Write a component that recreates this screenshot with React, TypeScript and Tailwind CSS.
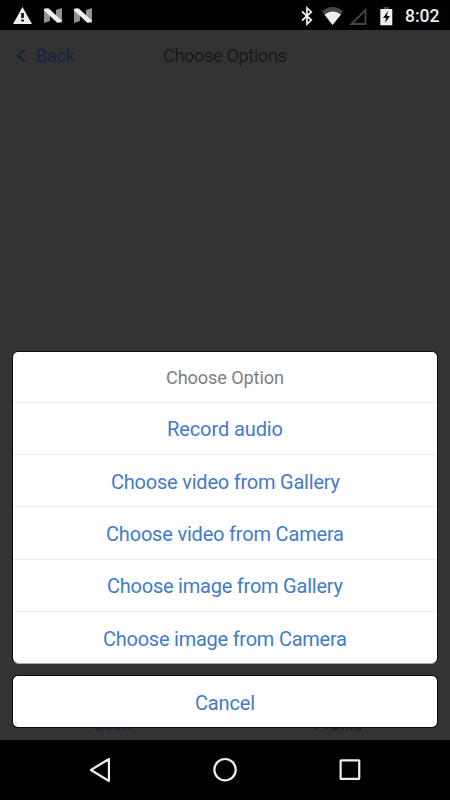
const options = [
  { label: "Record audio", width: 116 },
  { label: "Choose video from Gallery", width: 229 },
  { label: "Choose video from Camera", width: 238 },
  { label: "Choose image from Gallery", width: 236 },
  { label: "Choose image from Camera", width: 244 },
];

function Label({ text, width, size, baseline = 20, className = "" }: { text: string; width: number; size: number; baseline?: number; className?: string }) {
  return (
    <svg width={width} height="28" className={`overflow-visible ${className}`}>
      <text x="0" y={baseline} fontSize={size} textLength={width} fill="currentColor">{text}</text>
    </svg>
  );
}

function NougatIcon() {
  return (
    <svg width="18" height="16" viewBox="0 0 18 16">
      <path d="M0 1 6 3V13L0 15ZM18 0V15L12 13V2Z" fill="#929292" />
      <path d="M0 1Q2.5-.2 4.8.6L18 12.8Q15.5 15.3 13 14.5L0 2.6Z" fill="#eee" />
    </svg>
  );
}

function StatusBar() {
  return (
    <header className="flex h-[30px] items-center justify-between bg-black pr-[10px] pl-[13px] text-[#eee]">
      <div className="flex items-center gap-[12px] pt-px">
        <svg width="19" height="17" viewBox="0 0 19 17">
          <path d="M9.5 0 19 17H0Z" fill="#eee" />
          <path d="M8.3 6h2.5v5H8.3Zm0 6.5h2.5v2H8.3Z" fill="#000" />
        </svg>
        <NougatIcon />
        <NougatIcon />
      </div>
      <div className="flex items-center">
        <svg className="mt-px" width="104" height="20" viewBox="0 0 104 20">
          <path d="m2 5.5 9.3 8.5-4.3 4V2l4.3 4L2 14.5" fill="none" stroke="#eee" strokeWidth="1.7" />
          <path d="M22 5.2Q32.5-3.4 43.3 5.2L32.5 19Z" fill="#474747" />
          <path d="M24.5 8.5Q32.5 2.5 41 8.5L32.5 19Z" fill="#eee" />
          <path d="M51.5 18 65.5 4V18Z" fill="none" stroke="#474747" strokeWidth="1.8" />
          <path d="M83.5 1h5.3v3h-5.3Z" fill="#474747" />
          <path d="M80.3 3h12v16.3h-12Z" fill="#eee" />
          <path d="m88 5-5 7h3l-1 5 5-7h-3Z" fill="#111" />
        </svg>
        <span className="ml-[1px] w-[35px] pt-px text-[17.5px] leading-[30px] font-medium">8:02</span>
      </div>
    </header>
  );
}

export default function App() {
  return (
    <div className="relative flex h-[800px] w-[450px] flex-col overflow-hidden bg-[#333] font-['Roboto',sans-serif]">
      <StatusBar />
      <div className="grid h-[53px] shrink-0 grid-cols-3 items-center border-b border-[#303030] text-[#191919]">
        <button className="flex items-center text-[#17233d]">
          <svg className="ml-[16px]" width="10" height="15" viewBox="0 0 10 15">
            <path d="M8.5 .5 2.2 6.7l6.3 6.3" fill="none" stroke="currentColor" strokeWidth="2.4" />
          </svg>
          <Label text="Back" width={39} size={18.2} className="ml-[10px]" />
        </button>
        <Label text="Choose Options" width={124} size={18.2} className="justify-self-center" />
      </div>
      <main className="flex-1" />
      <nav className="grid h-[30px] shrink-0 grid-cols-2 justify-items-center text-[#191919]">
        <Label text="Scan" width={39} size={18} className="text-[#17233d]" />
        <Label text="Profile" width={50} size={18} />
      </nav>
      <footer className="grid h-[60px] shrink-0 grid-cols-3 bg-black px-[38px]">
        <svg className="h-[60px] w-full" viewBox="0 0 124 60">
          <path d="M70.6 19v22L52.6 30Z" fill="none" stroke="#eee" strokeWidth="2.2" strokeLinejoin="round" />
        </svg>
        <svg className="h-[60px] w-full" viewBox="0 0 124 60">
          <circle cx="61.7" cy="29.7" r="10.7" fill="none" stroke="#eee" strokeWidth="2.2" />
        </svg>
        <svg className="h-[60px] w-full" viewBox="0 0 124 60">
          <rect x="53.3" y="20.3" width="18.6" height="18.6" rx=".5" fill="none" stroke="#eee" strokeWidth="2.2" />
        </svg>
      </footer>
      <div className="absolute inset-x-[13px] bottom-[73px] text-center text-[#427bcb]">
        <section className="h-[311px] overflow-hidden rounded-[5px] bg-white shadow-[0_-1px_0_#111,-1px_0_0_#050505,1px_0_0_#111,0_1px_0_#aaa]">
          <div className="flex h-[49.5px] items-center justify-center text-[#808080]">
            <Label text="Choose Option" width={118} size={18.2} baseline={21.3} />
          </div>
          {options.map(({ label, width }) => (
            <button key={label} className="flex h-[52.4px] w-full items-center justify-center border-t border-[#ececec]">
              <Label text={label} width={width} size={20} baseline={21.5} />
            </button>
          ))}
        </section>
        <button className="mt-[13px] flex h-[51px] w-full items-center justify-center rounded-[5px] bg-white shadow-[0_0_0_1px_#080808]">
          <Label text="Cancel" width={60} size={20} baseline={21.5} />
        </button>
      </div>
    </div>
  );
}
